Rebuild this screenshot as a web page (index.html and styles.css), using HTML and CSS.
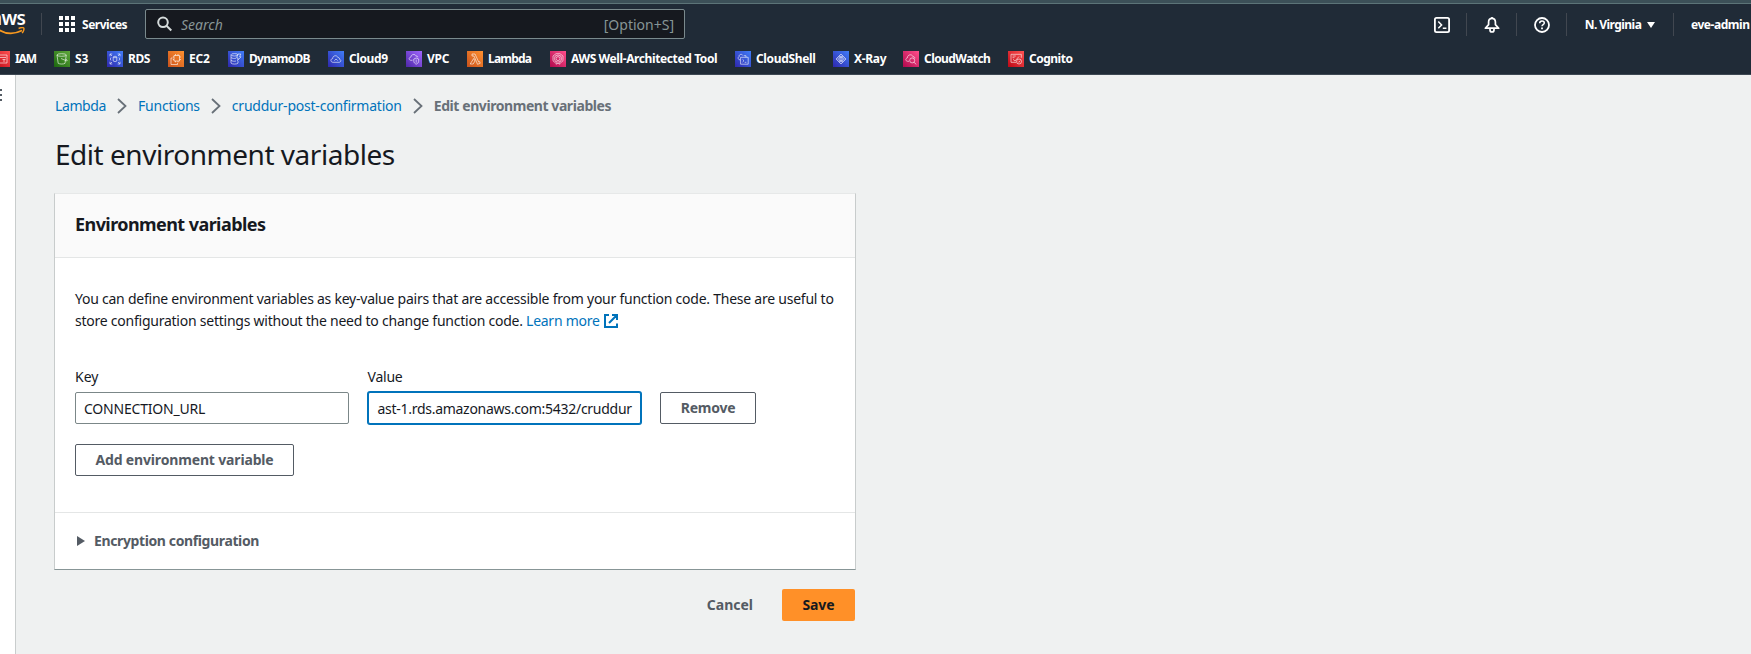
FILE: index.html
```html
<!DOCTYPE html>
<html lang="en">
<head>
<meta charset="utf-8">
<title>Edit environment variables - Lambda</title>
<link rel="stylesheet" href="styles.css">
</head>
<body>
<svg class="defs" width="0" height="0" aria-hidden="true">
  <defs>
    <linearGradient id="red" x1="0" y1="1" x2="1" y2="0"><stop offset="0" stop-color="#bd0816"/><stop offset="1" stop-color="#ff5252"/></linearGradient>
    <linearGradient id="green" x1="0" y1="1" x2="1" y2="0"><stop offset="0" stop-color="#1b660f"/><stop offset="1" stop-color="#5fa83a"/></linearGradient>
    <linearGradient id="blue" x1="0" y1="1" x2="1" y2="0"><stop offset="0" stop-color="#2e27ad"/><stop offset="1" stop-color="#407df8"/></linearGradient>
    <linearGradient id="orange" x1="0" y1="1" x2="1" y2="0"><stop offset="0" stop-color="#c8511b"/><stop offset="1" stop-color="#ff9130"/></linearGradient>
    <linearGradient id="purple" x1="0" y1="1" x2="1" y2="0"><stop offset="0" stop-color="#4d27a8"/><stop offset="1" stop-color="#a166ff"/></linearGradient>
    <linearGradient id="pink" x1="0" y1="1" x2="1" y2="0"><stop offset="0" stop-color="#b0084d"/><stop offset="1" stop-color="#ff4f8b"/></linearGradient>
  </defs>
</svg>

<header class="header">
  <div class="topbar">
    <div class="logo">
      <span class="logo-text">aws</span>
      <svg class="logo-smile" width="30" height="9" viewBox="0 0 30 9"><path d="M1 1.500C9 7.500 18 7.600 26 3.600" fill="none" stroke="#f7981f" stroke-width="1.700"/><path d="M22.600 1.500c2-.9 4.600-1 5.200-.4.500.7-.2 3.300-1.700 5" fill="none" stroke="#f7981f" stroke-width="1.400"/></svg>
    </div>
    <button class="services">
      <svg width="16" height="16" viewBox="0 0 16 16" fill="#fff"><path d="M0 0h4v4H0zM6 0h4v4H6zM12 0h4v4h-4zM0 6h4v4H0zM6 6h4v4H6zM12 6h4v4h-4zM0 12h4v4H0zM6 12h4v4H6zM12 12h4v4h-4z"/></svg>
      <span class="f-services">Services</span>
    </button>
    <div class="search">
      <svg width="16" height="16" viewBox="0 0 16 16" fill="none" stroke="#d5dbdb" stroke-width="2"><circle cx="6" cy="6.300" r="4.800"/><path d="M9.500 9.800l4.800 4.700"/></svg>
      <span class="placeholder">Search</span>
      <span class="hint">[Option+S]</span>
    </div>
    <nav class="tools">
      <div class="tool"><svg width="16" height="16" viewBox="0 0 16 16" fill="none" stroke="#fff" stroke-width="1.800"><rect x=".9" y=".9" width="14.200" height="14.200" rx="1.600"/><path d="M4.300 4.600L7.600 8l-3.300 3.300M8.800 11.300h3.600" stroke-width="1.500"/></svg></div>
      <div class="tool"><svg width="16" height="16" viewBox="0 0 16 16" fill="none" stroke="#fff" stroke-width="1.700" stroke-linejoin="round"><path d="M8 1.300C5.700 1.300 4.600 3 4.600 5v2.600L1.300 11.200h13.400L11.400 7.600V5C11.400 3 10.300 1.300 8 1.300z"/><path d="M6 11.500v1.500a2 2 0 004 0v-1.500"/><path d="M8 0v1.500"/></svg></div>
      <div class="tool"><svg width="16" height="16" viewBox="0 0 16 16" fill="none" stroke="#fff" stroke-width="1.800"><circle cx="8" cy="8" r="7"/><path d="M5.700 6.300C5.700 4.900 6.700 4 8 4s2.300.8 2.300 2.100C10.300 7.600 8 7.600 8 9.300" stroke-width="1.500"/><path d="M8 10.600v1.700"/></svg></div>
      <div class="tool region"><span class="f-region">N. Virginia</span><svg width="8" height="6" viewBox="0 0 8 6" fill="#fff"><path d="M0 0h8L4 6z"/></svg></div>
      <div class="tool account"><span class="f-account">eve-admin</span></div>
    </nav>
  </div>
  <nav class="favorites">
    <a class="fav"><svg class="ico" viewBox="0 0 16 16"><rect width="16" height="16" fill="url(#red)"/><path d="M3 4h10v8H3zM4 6.500h8M8.500 8.500h3M10 8.500V11"/></svg><span class="f-iam">IAM</span></a>
    <a class="fav"><svg class="ico" viewBox="0 0 16 16"><rect width="16" height="16" fill="url(#green)"/><path d="M3 4l1.200 8.300c1.800 1 5.200 1 6.800 0L12.300 4"/><ellipse cx="7.600" cy="4" rx="4.700" ry="1.300"/><path d="M7 7.500l5.500 2.300c1 .3 1 -.8-.6-1.700"/></svg><span class="f-s3">S3</span></a>
    <a class="fav"><svg class="ico" viewBox="0 0 16 16"><rect width="16" height="16" fill="url(#blue)"/><path d="M3 5.300V3h2.300M3.200 3.200L5 5M13 5.300V3h-2.300M12.800 3.200L11 5M3 10.700V13h2.300M3.200 12.800L5 11M13 10.700V13h-2.300M12.800 12.800L11 11M6.200 6v4c.8.700 2.800.7 3.600 0V6M4 6.500L3.300 8 4 9.500M12 6.500l.7 1.500-.7 1.500"/><ellipse cx="8" cy="6" rx="1.800" ry=".7"/></svg><span class="f-rds">RDS</span></a>
    <a class="fav"><svg class="ico" viewBox="0 0 16 16"><rect width="16" height="16" fill="url(#orange)"/><path d="M6 4.500h5.500V10H6zM9.500 12v1.500H3V7h1.500M7.500 4.500V3M10 4.500V3M11.500 6H13M11.500 8.500H13M6 6H4.800M6 8.500H4.800M7.500 10v1.300M10 10v1.300"/></svg><span class="f-ec2">EC2</span></a>
    <a class="fav"><svg class="ico" viewBox="0 0 16 16"><rect width="16" height="16" fill="url(#blue)"/><ellipse cx="6.500" cy="3.800" rx="3.500" ry="1.200"/><path d="M3 3.800v8.300c1 1.300 6 1.300 7 0v-2M3 6.500c1 1 3.500 1.200 5 .7M3 9.300c1 1 3.500 1.200 5 .7M9.800 3h3l-1.200 2.800H13L9.500 9.600l.7-2.600H8.700z"/></svg><span class="f-dynamo">DynamoDB</span></a>
    <a class="fav"><svg class="ico" viewBox="0 0 16 16"><rect width="16" height="16" fill="url(#blue)"/><path d="M5 11.300c-2.700 0-2.800-3.500-.3-3.700C4.500 4.500 9 3.500 10 6.700c1.200-.3 1.600.7 1.500 1.500 2 .5 1.600 3.100-.5 3.100zM6.300 9.600L8 8l1.700 1.600"/></svg><span class="f-cloud9">Cloud9</span></a>
    <a class="fav"><svg class="ico" viewBox="0 0 16 16"><rect width="16" height="16" fill="url(#purple)"/><path d="M6.500 9.300H4.800C2.500 9 2.700 6.300 4.800 6.200 5 3 9.500 2.500 10 5.200c1.500-.4 1.900.4 1.800 1.200M7.800 8l2.400-1 2.500 1v2.200c0 1.500-1.200 2.300-2.500 3-1.300-.7-2.400-1.500-2.400-3zM10.200 8.500v3.200"/></svg><span class="f-vpc">VPC</span></a>
    <a class="fav"><svg class="ico" viewBox="0 0 16 16"><rect width="16" height="16" fill="url(#orange)"/><path d="M5 3h3l3.700 8 1-.4.500 1.700-2.700 1L7 5H5zM6.700 7.500L8 10l-1.800 3H3.200z"/></svg><span class="f-lambda">Lambda</span></a>
    <a class="fav"><svg class="ico" viewBox="0 0 16 16"><rect width="16" height="16" fill="url(#pink)"/><circle cx="8" cy="7.600" r="2"/><circle cx="8" cy="7.600" r="3.600"/><path d="M5 11.500L3 9.800 3 5l3-2.300h4L13 5v4.800l-2 1.700M6 10.800v2.400l2-.9 2 .9v-2.400"/></svg><span class="f-wat">AWS Well-Architected Tool</span></a>
    <a class="fav"><svg class="ico" viewBox="0 0 16 16"><rect width="16" height="16" fill="url(#blue)"/><path d="M5.600 6.300h7.600v6.900H5.600zM7.500 8.300l1.500 1.400-1.500 1.400M9.700 11.300h1.700M5.300 9C3 9 2.500 6.300 4 5.700 3.800 3.500 6.500 2.300 8 4.500M9 4.700h2v1.500"/></svg><span class="f-shell">CloudShell</span></a>
    <a class="fav"><svg class="ico" viewBox="0 0 16 16"><rect width="16" height="16" fill="url(#blue)"/><path d="M3 8l5-5 5 5-5 5zM4.500 8c2-2.500 5-2.500 7 0-2 2.500-5 2.500-7 0zM6 5.300h4M6 10.700h4"/><circle cx="8" cy="8" r="1.300"/></svg><span class="f-xray">X-Ray</span></a>
    <a class="fav"><svg class="ico" viewBox="0 0 16 16"><rect width="16" height="16" fill="url(#pink)"/><path d="M6 10.300H4.500C2.300 10 2.300 7.300 4.300 7 4.300 3.500 9 2.600 10 5.700c1.500-.1 2 1 1.800 1.700M11 11.300l2.300 2.100"/><circle cx="9.200" cy="9.400" r="2.500"/></svg><span class="f-watch">CloudWatch</span></a>
    <a class="fav"><svg class="ico" viewBox="0 0 16 16"><rect width="16" height="16" fill="url(#red)"/><path d="M8 11.300H3V3.300h10.300v3.500M4.500 5h3.300M4.500 6.700h2M5 8.300l2 1.700 4-4.500"/><circle cx="11" cy="10.500" r="2.500"/><path d="M10 10.500l.8.800 1.300-1.500"/></svg><span class="f-cognito">Cognito</span></a>
  </nav>
</header>

<div class="layout">
  <aside class="rail"><svg width="2" height="12" viewBox="0 0 2 12" fill="#545b64"><path d="M0 0h2v2H0zM0 5h2v2H0zM0 10h2v2H0z"/></svg></aside>
  <main class="main">
    <nav class="crumbs">
      <a class="f-c1">Lambda</a>
      <svg class="chev" viewBox="0 0 10 16"><path d="M1 1l7.500 7L1 15"/></svg>
      <a class="f-c2">Functions</a>
      <svg class="chev" viewBox="0 0 10 16"><path d="M1 1l7.500 7L1 15"/></svg>
      <a class="f-c3">cruddur-post-confirmation</a>
      <svg class="chev" viewBox="0 0 10 16"><path d="M1 1l7.500 7L1 15"/></svg>
      <span class="current">Edit environment variables</span>
    </nav>
    <h1 class="title">Edit environment variables</h1>
    <section class="card">
      <div class="card-head"><h2 class="card-title">Environment variables</h2></div>
      <div class="card-body">
        <p class="desc">You can define environment variables as key-value pairs that are accessible from your function code. These are useful to<br>store configuration settings without the need to change function code. <a class="learn">Learn more<svg width="14" height="14" viewBox="0 0 14 14" fill="none" stroke="#0073bb" stroke-width="2"><path d="M5 1H1v12h12V9.500M8 1h5v5M13 1L5 9"/></svg></a></p>
        <div class="row">
          <div class="field"><label class="label f-key">Key</label><div class="input f-conn">CONNECTION_URL</div></div>
          <div class="field"><label class="label f-value">Value</label><div class="input focused f-url">ast-1.rds.amazonaws.com:5432/cruddur</div></div>
          <button class="btn remove">Remove</button>
        </div>
        <button class="btn add">Add environment variable</button>
      </div>
      <div class="expander"><svg width="8" height="10" viewBox="0 0 8 10" fill="#545b64"><path d="M0 0l8 5-8 5z"/></svg><span class="f-enc">Encryption configuration</span></div>
    </section>
    <div class="actions"><button class="link-btn">Cancel</button><button class="save">Save</button></div>
  </main>
</div>
</body>
</html>
```
FILE: styles.css
```css
* { box-sizing: border-box; }
html, body { margin: 0; height: 654px; overflow: hidden; }
body { font-family: "Noto Sans", "Open Sans", sans-serif; font-size: 14px; line-height: 22px; color: #16191f; background: #eff1f1; display: flex; flex-direction: column; }
button { font: inherit; border: 0; background: none; padding: 0; color: inherit; }
.defs { position: absolute; }

/* Header */
.header { flex: none; height: 75px; background: #202b37; border-top: 3px solid #3c5058; border-bottom: 1px solid #3d4853; box-shadow: inset 0 1px #5c7478; color: #fff; font-size: 12px; font-weight: 700; overflow: hidden; white-space: nowrap; }
.topbar { display: flex; height: 42px; align-items: center; }
.topbar span { padding-top: 1px; }
.logo { width: 42px; height: 22px; border-right: 1px solid #414750; display: flex; flex-direction: column; }
.logo .logo-text { margin: -4px 0 0 -9px; padding: 0; font-size: 19px; line-height: 18px; letter-spacing: -.7px; font-weight: 600; }
.logo-smile { margin: 0 0 0 -4px; flex: none; }
.services { display: flex; align-items: center; gap: 7px; width: 103px; padding-left: 17px; }
.search { width: 540px; height: 30px; border: 1px solid #7a8a8d; border-radius: 2px; background: #16191f; display: flex; align-items: center; padding: 0 10px 0 11px; font-size: 14px; font-weight: 400; color: #879596; }
.placeholder { font-style: italic; margin-left: 8px; }
.hint { margin-left: auto; }
.tools { margin-left: auto; display: grid; grid-template-columns: 50px 50px 50px 107px 77px; height: 22px; }
.tool { display: flex; align-items: center; justify-content: center; border-right: 1px solid #414750; }
.region { gap: 6px; }
.account { border: 0; justify-content: flex-start; padding-left: 17px; }
.favorites { display: grid; grid-template-columns: 60px 53px 61px 60px 100px 78px 61px 83px 185px 98px 70px 105px 80px; margin: 3px 0 0 -6px; height: 22px; }
.fav { display: flex; align-items: center; gap: 5px; height: 22px; }
.ico { width: 16px; height: 16px; flex: none; fill: none; stroke: #fff; stroke-opacity: .85; stroke-width: .7; }
.ico rect { stroke: none; }

/* Page */
.layout { flex: 1; display: flex; }
.rail { width: 16px; background: #fff; border-right: 1px solid #c9cdcd; padding-top: 14px; line-height: 0; }
.main { padding: 20px 0 0 38px; width: 840px; }
.crumbs { display: flex; align-items: center; height: 22px; color: #0073bb; padding-left: 1px; white-space: nowrap; }
.chev { flex: none; width: 10px; height: 16px; margin: 0 11px; fill: none; stroke: #687078; stroke-width: 1.8; }
.current { color: #687078; font-weight: 700; letter-spacing: -.43px; }
.title { margin: 19px 0 0 1px; font-size: 28px; line-height: 36px; font-weight: 400; letter-spacing: -.47px; white-space: nowrap; }
.card { margin-top: 21px; width: 802px; height: 377px; background: #fff; border: 1px solid #c8cccc; border-top-color: #e6e8e8; border-bottom-color: #879596; }
.card-head { height: 64px; background: #fafafa; border-bottom: 1px solid #e4e6e6; padding: 18px 20px; }
.card-title { margin: 0; font-size: 18px; line-height: 24px; font-weight: 700; letter-spacing: -.57px; }
.card-body { height: 254px; padding: 30px 20px 0; white-space: nowrap; }
.desc { margin: 0; letter-spacing: -.24px; }
.learn { color: #0073bb; letter-spacing: -.27px; }
.learn svg { margin-left: 4px; vertical-align: -2px; }
.row { display: flex; align-items: flex-end; gap: 19px; margin-top: 34px; }
.field { width: 273.500px; }
.label { display: block; height: 26px; }
.input { height: 32px; border: 1px solid #7b8788; border-radius: 2px; padding: 6px 8px 4px; line-height: 20px; background: #fff; }
.focused { border-color: #0073bb; box-shadow: 0 0 0 1px #0073bb; }
.btn { display: flex; align-items: center; justify-content: center; height: 32px; border: 1px solid #545b64; border-radius: 2px; color: #545b64; font-weight: 700; }
.remove { width: 96px; letter-spacing: -.25px; }
.add { width: 219px; margin-top: 20px; letter-spacing: -.16px; }
.expander { height: 57px; border-top: 1px solid #e4e6e6; padding-left: 22px; display: flex; align-items: center; gap: 9px; font-weight: 700; color: #545b64; }
.actions { display: flex; justify-content: flex-end; width: 801px; margin-top: 19px; font-weight: 700; letter-spacing: -.12px; }
.link-btn { margin-right: 29px; color: #545b64; }
.save { width: 73px; height: 32px; border-radius: 2px; background: #ff9028; color: #16191f; letter-spacing: inherit; }

/* Tracking per label */
.f-services { letter-spacing: -.48px; }
.f-region { letter-spacing: -.55px; }
.f-account { letter-spacing: -.46px; }
.f-iam { letter-spacing: -1.1px; }
.f-rds { letter-spacing: -.4px; }
.f-ec2 { letter-spacing: -.2px; }
.f-dynamo { letter-spacing: -.72px; }
.f-cloud9 { letter-spacing: -.4px; }
.f-vpc { letter-spacing: -.3px; }
.f-lambda { letter-spacing: -.8px; }
.f-wat { letter-spacing: -.39px; }
.f-shell { letter-spacing: -.34px; }
.f-xray { letter-spacing: -.3px; }
.f-watch { letter-spacing: -.56px; }
.f-cognito { letter-spacing: -.5px; }
.f-c1 { letter-spacing: -.39px; }
.f-c2 { letter-spacing: -.22px; }
.f-c3 { letter-spacing: -.22px; }
.f-conn { letter-spacing: -.2px; }
.f-value { letter-spacing: -.23px; }
.f-url { letter-spacing: -.28px; padding-left: 9px; }
.f-enc { letter-spacing: -.38px; }
```
